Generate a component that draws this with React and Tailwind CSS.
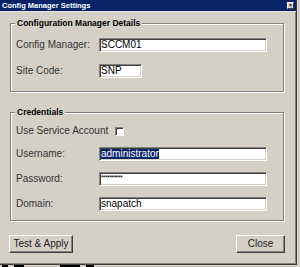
const font = { fontFamily: '"Liberation Sans", Arial, sans-serif' };

function GroupBox({ title, className, children }) {
    return (
        <div className={`relative border border-[#808080] shadow-[inset_1px_1px_0_#fff,1px_1px_0_#fff] ${className}`}>
            <span className="absolute left-[4px] top-[-7px] bg-[#d4d0c8] px-[2px] text-[8.5px] font-bold leading-[12px] text-black">
                {title}
            </span>
            {children}
        </div>
    );
}

function TextBox({ className, children }) {
    return (
        <div className={`flex h-[14px] items-center border border-t-[#808080] border-l-[#808080] border-b-white border-r-white bg-white pl-[1px] shadow-[inset_1px_1px_0_#404040,inset_-1px_-1px_0_#d4d0c8] text-[10px] leading-none text-black ${className}`}>
            {children}
        </div>
    );
}

function Field({ label, children, className = '' }) {
    return (
        <div className={`flex h-[14px] items-center ${className}`}>
            <span className="w-[83px] text-[10px] leading-none text-[#333]">{label}</span>
            {children}
        </div>
    );
}

function Button({ children, className }) {
    return (
        <button className={`flex h-[18px] items-center justify-center border border-t-white border-l-white border-b-[#404040] border-r-[#404040] bg-[#d4d0c8] shadow-[inset_-1px_-1px_0_#808080] text-[10px] leading-none text-[#222] ${className}`}>
            {children}
        </button>
    );
}

export default function App() {
    return (
        <div className="flex h-[267px] w-[300px] flex-col overflow-hidden bg-[#d4d0c8]" style={font}>
            <div className="flex h-[265px] w-[297px] flex-col border-r border-b border-[#404040] shadow-[inset_-1px_-1px_0_#808080]">
                {/* Title bar */}
                <div className="flex h-[11px] items-center justify-between bg-[#0a246a] pl-[2px] pr-[2px]">
                    <span className="text-[7.5px] font-bold leading-none text-white">Config Manager Settings</span>
                    <div className="flex h-[7px] w-[7px] items-center justify-center border border-t-white border-l-white border-b-[#404040] border-r-[#404040] bg-[#d4d0c8]">
                        <span className="text-[5px] font-bold leading-none text-black">×</span>
                    </div>
                </div>
                <div className="h-px bg-[#e8e6e0]" />

                {/* Configuration Manager Details */}
                <GroupBox title="Configuration Manager Details" className="ml-[10px] mt-[11px] h-[69px] w-[274px]">
                    <div className="flex flex-col pl-[5px]">
                        <Field label="Config Manager:" className="mt-[14px]">
                            <TextBox className="w-[168px]">SCCM01</TextBox>
                        </Field>
                        <Field label="Site Code:" className="mt-[12px]">
                            <TextBox className="w-[43px]">SNP</TextBox>
                        </Field>
                    </div>
                </GroupBox>

                {/* Credentials */}
                <GroupBox title="Credentials" className="ml-[10px] mt-[20px] h-[109px] w-[274px]">
                    <div className="flex flex-col pl-[5px]">
                        <div className="mt-[11px] flex h-[14px] items-center">
                            <span className="text-[10px] leading-none text-[#333]">Use Service Account</span>
                            <div className="ml-[7px] h-[9px] w-[9px] border border-t-[#808080] border-l-[#808080] border-b-white border-r-white bg-white shadow-[inset_1px_1px_0_#404040]" />
                        </div>
                        <Field label="Username:" className="mt-[9px]">
                            <TextBox className="w-[168px]">
                                <span className="bg-[#0a246a] text-white">administrator</span>
                            </TextBox>
                        </Field>
                        <Field label="Password:" className="mt-[11px]">
                            <TextBox className="w-[168px] items-start">
                                <span className="mt-[1px] text-[7px] tracking-[-0.6px]">**********</span>
                            </TextBox>
                        </Field>
                        <Field label="Domain:" className="mt-[11px]">
                            <TextBox className="w-[168px]">snapatch</TextBox>
                        </Field>
                    </div>
                </GroupBox>

                {/* Buttons */}
                <div className="mt-[14px] flex justify-between pl-[9px] pr-[11px]">
                    <Button className="w-[64px]">Test &amp; Apply</Button>
                    <Button className="w-[49px]">Close</Button>
                </div>
            </div>
            <div className="flex h-[2px] gap-[6px] pl-[2px]">
                <div className="w-[6px] bg-black" />
                <div className="w-[10px] bg-black" />
                <div className="ml-[30px] w-[20px] bg-black" />
                <div className="w-[8px] bg-black" />
            </div>
        </div>
    );
}
